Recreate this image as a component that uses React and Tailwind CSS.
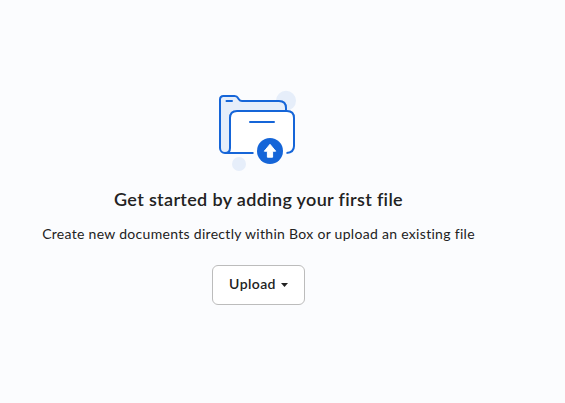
export default function App() {
  return (
    <main className="flex h-[403px] w-[565px] flex-col items-start overflow-hidden bg-[#fbfcfe] font-['Lato',sans-serif] text-[#222]">
      <section className="flex w-[517px] flex-col items-center pt-[88px]">
        <svg width="89" height="88" viewBox="214 88 89 88" fill="none">
          <circle cx="286" cy="100.700" r="10" fill="#e6eefa" />
          <circle cx="239" cy="164" r="7" fill="#e6eefa" />
          <path d="M225 153a5 5 0 0 1-5-5V99.500Q220 96 223.500 96h11q2.500 0 3.500 2l1 1.500q1 1.500 3 1.500h37q7 0 7 7v3h-49q-7 0-7 7v30q0 5-5 5z" fill="#e6eefa" />
          <path d="M225 153q5 0 5-5v-30q0-7 7-7h50q7 0 7 7v28q0 7-7 7z" fill="#fff" />
          <g stroke="#1565d8" strokeWidth="2">
            <path d="M225 153a5 5 0 0 1-5-5V99.500Q220 96 223.500 96h11q2.500 0 3.500 2l1 1.500q1 1.500 3 1.500h37q7 0 7 7v3" />
            <path d="M253.500 153H225q5 0 5-5v-30q0-7 7-7h50q7 0 7 7v28q0 6.500-7.500 7" />
            <path d="M226.500 101h5.500M250 122h24" strokeLinecap="round" />
          </g>
          <circle cx="270" cy="151" r="13" fill="#1565d8" />
          <path d="m270 144.300 5.700 6.900h-3.100v6h-5.200v-6h-3.100z" fill="#fff" stroke="#fff" strokeLinejoin="round" />
        </svg>
        <h1 className="mt-[11px] whitespace-nowrap text-[18px] font-semibold leading-[24px] tracking-[0.34px]">Get started by adding your first file</h1>
        <p className="mt-[13px] whitespace-nowrap text-[14px] leading-[20px] tracking-[0.3px]">Create new documents directly within Box or upload an existing file</p>
        <button className="mt-[21px] flex h-[40px] w-[93px] items-center justify-center gap-[5px] rounded-[6px] border border-[#bcbcbc] bg-white pb-[4px] text-[14px] font-semibold tracking-[0.4px]">
          <span>Upload</span>
          <svg className="mt-[4px]" width="7" height="4" viewBox="0 0 7 4"><path d="M0 0h7L3.500 4z" fill="#222" /></svg>
        </button>
      </section>
    </main>
  );
}
